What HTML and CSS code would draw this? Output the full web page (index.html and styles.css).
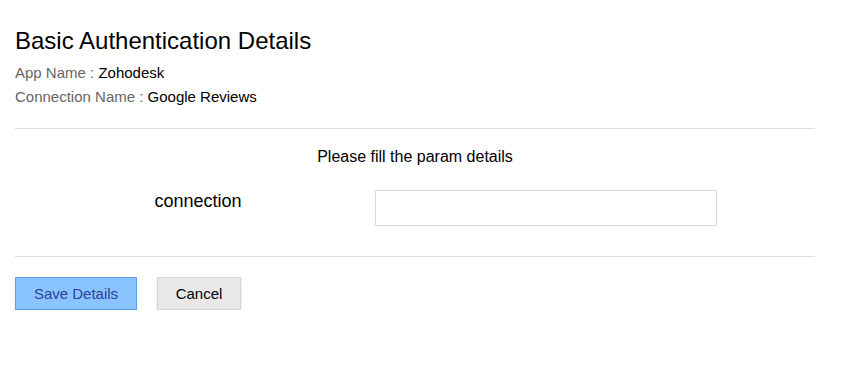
FILE: index.html
```html
<!DOCTYPE html>
<html>
<head>
<meta charset="utf-8">
<link rel="stylesheet" href="styles.css">
</head>
<body>
<div class="page">
  <h1 class="title">Basic Authentication Details</h1>
  <div class="meta"><span class="label">App Name : </span><span class="value">Zohodesk</span></div>
  <div class="meta"><span class="label">Connection Name : </span><span class="value">Google Reviews</span></div>
  <hr class="sep first">
  <div class="intro">Please fill the param details</div>
  <div class="param-row">
    <div class="param-label">connection</div>
    <div class="param-field"><input class="param-input" type="text"></div>
  </div>
  <hr class="sep second">
  <div class="actions">
    <button class="btn btn-primary">Save Details</button>
    <button class="btn btn-secondary">Cancel</button>
  </div>
</div>
</body>
</html>
```
FILE: styles.css
```css
html, body {
  margin: 0;
  padding: 0;
  background: #fff;
}
body {
  font-family: "Liberation Sans", Arial, sans-serif;
  color: #000;
}
.page {
  width: 800px;
  padding: 0 15px;
}
.title {
  font-size: 24px;
  font-weight: normal;
  margin: 0;
  padding-top: 28px;
  line-height: 26px;
  height: 26px;
  margin-bottom: 7px;
}
.meta {
  font-size: 15px;
  line-height: 24px;
  height: 24px;
}
.label { color: #666; }
.value { color: #000; }
.sep {
  border: 0;
  border-top: 1px solid #ddd;
  margin: 0;
  height: 0;
}
.sep.first { margin-top: 19px; }
.intro {
  text-align: center;
  font-size: 16px;
  line-height: 18px;
  margin-top: 19px;
}
.param-row {
  display: flex;
  align-items: flex-start;
  margin-top: 24px;
  height: 36px;
}
.param-label {
  box-sizing: border-box;
  width: 360px;
  padding-left: 6px;
  text-align: center;
  font-size: 18px;
  line-height: 22px;
}
.param-input {
  box-sizing: border-box;
  width: 342px;
  height: 36px;
  border: 1px solid #dadada;
  margin: 0;
  padding: 0 8px;
  font-family: inherit;
  outline: none;
}
.sep.second { margin-top: 30px; }
.actions {
  display: flex;
  gap: 20px;
  margin-top: 20px;
}
.btn {
  box-sizing: border-box;
  height: 33px;
  font-family: inherit;
  font-size: 15px;
  padding: 0;
  margin: 0;
  cursor: pointer;
  box-shadow: 0 2px 3px rgba(0,0,0,0.12);
}
.btn-primary {
  width: 122px;
  background: #8ac4ff;
  border: 1px solid #5f9ee6;
  color: #2b3f9e;
}
.btn-secondary {
  width: 84px;
  background: #e8e8e8;
  border: 1px solid #d6d6d6;
  color: #000;
}
```
